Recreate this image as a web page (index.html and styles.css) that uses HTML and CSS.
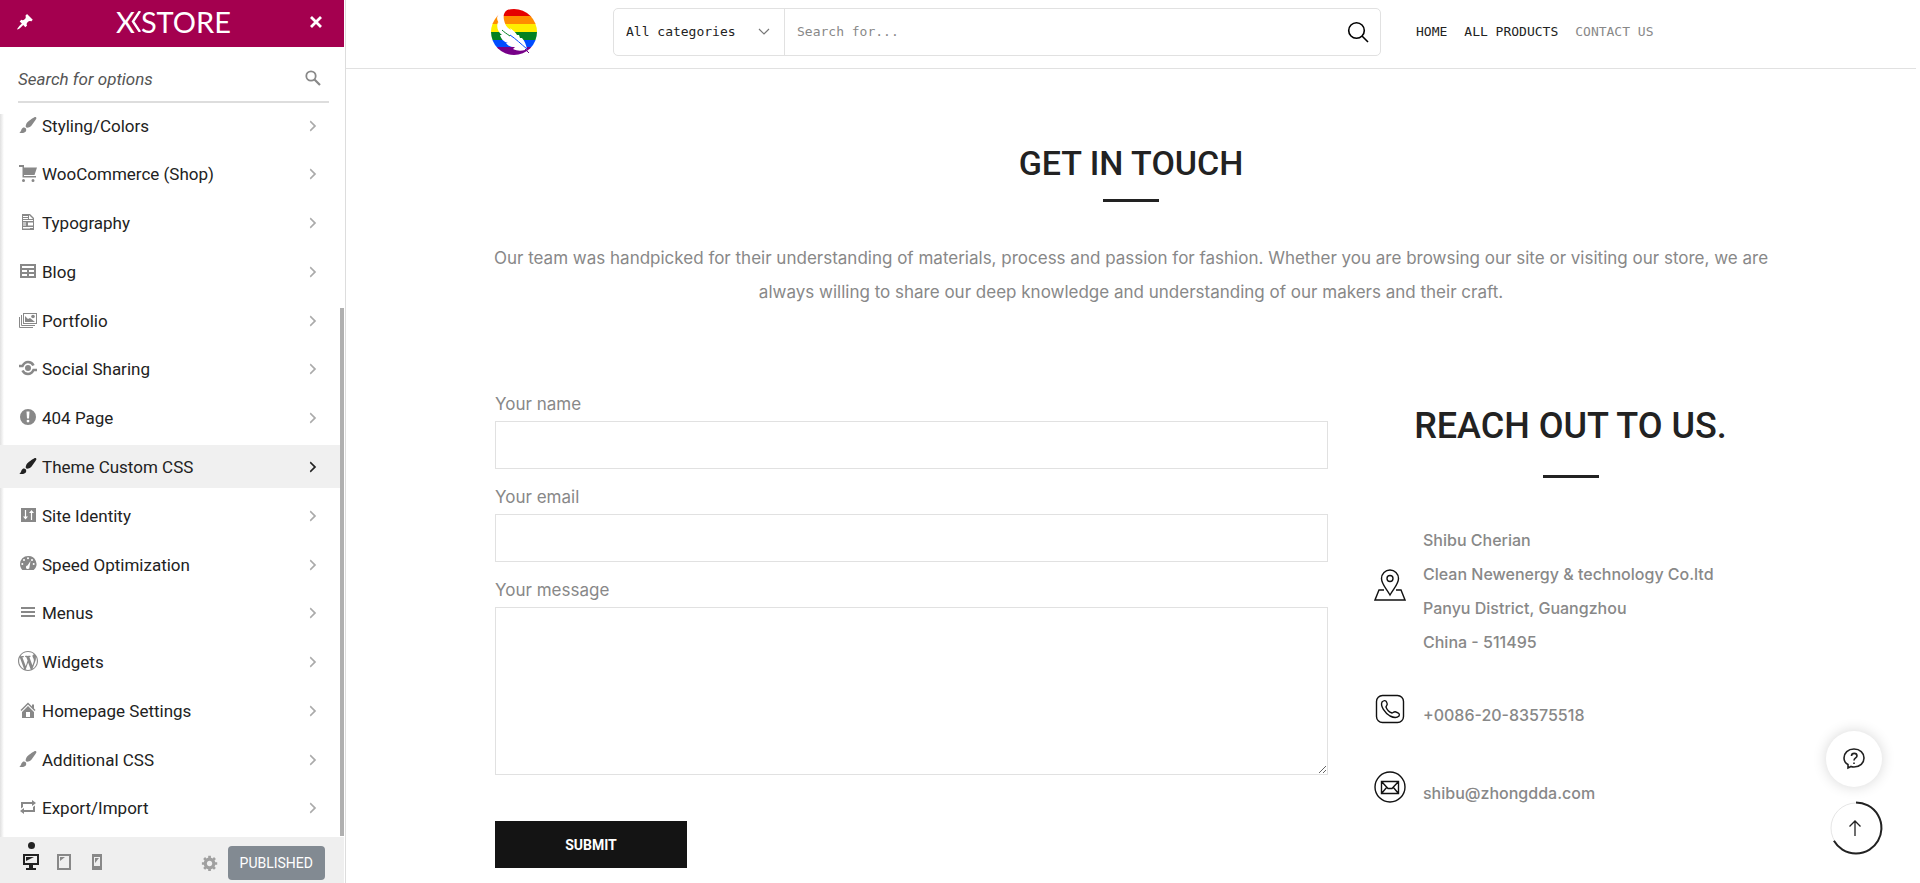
FILE: index.html
```html
<!DOCTYPE html>
<html lang="en">
<head>
    <meta charset="UTF-8">
    <meta name="viewport" content="width=device-width, initial-scale=1.0">
    <title>Contact Us</title>
    <link rel="stylesheet" href="styles.css">
</head>
<body>
    <!-- Shared icons -->
    <svg class="sprite" aria-hidden="true">
        <symbol id="i-brush" viewBox="0 0 20 20"><path d="M18.33 3.57s.27-.8-.31-1.36c-.53-.52-1.22-.24-1.22-.24-.61.3-5.76 3.47-7.67 5.57-.86.96-2.06 3.79-1.09 4.82.92.98 3.96-.17 4.79-1 2.06-2.06 5.21-7.17 5.5-7.79zM1.4 17.65c2.37-1.56 1.46-3.41 3.23-4.64.93-.65 2.22-.62 3.08.29.63.67.8 2.57-.16 3.46-1.57 1.45-4 1.55-6.15.89z"/></symbol>
        <symbol id="i-arrow" viewBox="0 0 20 20"><path d="M6 15l5-5-5-5 1-2 7 7-7 7z"/></symbol>
    </svg>

    <div class="customizer">
        <aside class="sidebar">
            <header class="sidebar-header">
                <button class="bar-button" aria-label="Pin">
                    <svg width="18" height="18" viewBox="0 0 20 20"><path d="M10.44 3.02l1.82-1.82 6.36 6.35-1.83 1.82c-1.05-.68-2.48-.57-3.41.36l-.75.75c-.92.93-1.04 2.35-.35 3.41l-1.83 1.82-2.41-2.41-2.8 2.79c-.42.42-3.38 2.71-3.8 2.29s1.86-3.39 2.28-3.81l2.79-2.79L4.1 9.36l1.83-1.82c1.05.69 2.48.57 3.4-.36l.75-.75c.93-.92 1.05-2.35.36-3.41z"/></svg>
                </button>
                <div class="brand">X<svg class="brand-mark" width="11" height="21" viewBox="0 0 11 21"><path d="M10 0L3 10.500L10 21" fill="none" stroke="#fff" stroke-width="2.400"/></svg>STORE</div>
                <button class="bar-button" aria-label="Close">
                    <svg width="14" height="14" viewBox="0 0 14 14"><path d="M2 2l10 10M12 2L2 12" fill="none" stroke="#fff" stroke-width="2.800"/></svg>
                </button>
            </header>

            <div class="options-search">
                <input type="search" aria-label="Search for options" placeholder="Search for options">
                <svg width="16" height="16" viewBox="0 0 16 16"><circle cx="6" cy="6" r="4.700" fill="none" stroke="#888" stroke-width="1.800"/><path d="M9.500 9.500L15 15" stroke="#888" stroke-width="2.200"/></svg>
            </div>

            <div class="options">
                <ul class="options-list">
                    <li><button><svg class="icon"><use href="#i-brush"/></svg>Styling/Colors<svg class="arrow"><use href="#i-arrow"/></svg></button></li>
                    <li><button><svg class="icon" viewBox="0 0 20 20"><path d="M6 13h12v1.500H4.500V4H1V2h5v2.500h13L16.500 12H6zM5.500 16a1.500 1.500 0 1 1 0 3 1.500 1.500 0 0 1 0-3zm9.500 0a1.500 1.500 0 1 1 0 3 1.500 1.500 0 0 1 0-3z"/></svg>WooCommerce (Shop)<svg class="arrow"><use href="#i-arrow"/></svg></button></li>
                    <li><button><svg class="icon" viewBox="0 0 20 20"><path fill-rule="evenodd" d="M4 2h8l4 4v12H4zM11 3v4h4zM5 4v1h5V4zm0 2v1h5V6zm0 2v1h10V8zm0 2.500v1h3v-1zm5 0v3h5v-3zm-5 2v1h3v-1zm0 2.500v1h10v-1zm0 1.500v.500h7v-.500z"/></svg>Typography<svg class="arrow"><use href="#i-arrow"/></svg></button></li>
                    <li><button><svg class="icon" viewBox="0 0 20 20"><path d="M18 17V3H2v14h16zM16 7H4V5h12v2zm-7 4H4V9h5v2zm7 0h-5V9h5v2zm-7 4H4v-2h5v2zm7 0h-5v-2h5v2z"/></svg>Blog<svg class="arrow"><use href="#i-arrow"/></svg></button></li>
                    <li><button><svg class="icon" viewBox="0 0 20 20"><path fill-rule="evenodd" d="M5 3h14v11H5zM6 4v9h12V4z"/><path d="M7 6l3 3 2-1 5 4H7z"/><circle cx="15" cy="6.500" r="1.800"/><path d="M3.500 5v10.500H17M1.500 7v10.500H15" fill="none" stroke="#888" stroke-width="1"/></svg>Portfolio<svg class="arrow"><use href="#i-arrow"/></svg></button></li>
                    <li><button><svg class="icon" viewBox="0 0 20 20"><circle cx="10" cy="10" r="3"/><path d="M1 8h3.500C6 5 8 4 10 4c2.500 0 4.500 1.500 5.500 3.500M19 12h-3.500C14 15 12 16 10 16c-2.500 0-4.500-1.500-5.500-3.500" fill="none" stroke="#888" stroke-width="2.600"/></svg>Social Sharing<svg class="arrow"><use href="#i-arrow"/></svg></button></li>
                    <li><button><svg class="icon" viewBox="0 0 20 20"><path fill-rule="evenodd" d="M10 2a8 8 0 1 1 0 16 8 8 0 0 1 0-16zM8.500 4.500l.500 7h2l.500-7zM10 12.700a1.400 1.400 0 1 0 0 2.800 1.400 1.400 0 0 0 0-2.800z"/></svg>404 Page<svg class="arrow"><use href="#i-arrow"/></svg></button></li>
                    <li class="active"><button><svg class="icon"><use href="#i-brush"/></svg>Theme Custom CSS<svg class="arrow"><use href="#i-arrow"/></svg></button></li>
                    <li><button><svg class="icon" viewBox="0 0 20 20"><path d="M3 3h15v14H3z"/><path d="M7.500 5v8M13.500 15V7" fill="none" stroke="#fff" stroke-width="1.200"/><path d="M5 11.500h5l-2.500 3zM11 8h5l-2.500-3z" fill="#fff"/></svg>Site Identity<svg class="arrow"><use href="#i-arrow"/></svg></button></li>
                    <li><button><svg class="icon" viewBox="0 0 20 20"><path d="M10 2a8 8 0 0 0-8 8c0 2.300.900 4.300 2.300 6h11.400A8 8 0 0 0 10 2z"/><g fill="#fff"><circle cx="10" cy="4.300" r="1"/><circle cx="6" cy="6" r="1"/><circle cx="14" cy="6" r="1"/><circle cx="4.300" cy="10" r="1"/><circle cx="15.700" cy="10" r="1"/><path d="M12.500 7l-1 6a1.800 1.800 0 1 1-2-1.500z"/></g></svg>Speed Optimization<svg class="arrow"><use href="#i-arrow"/></svg></button></li>
                    <li><button><svg class="icon" viewBox="0 0 20 20"><path d="M3 5h14v2H3zm0 4h14v2H3zm0 4h14v2H3z"/></svg>Menus<svg class="arrow"><use href="#i-arrow"/></svg></button></li>
                    <li><button><svg class="icon" viewBox="0 0 20 20"><path d="M20 10c0-5.510-4.490-10-10-10C4.480 0 0 4.490 0 10c0 5.520 4.480 10 10 10 5.510 0 10-4.480 10-10zM7.780 15.370L4.370 6.220c.55-.02 1.170-.08 1.170-.08.5-.06.44-1.130-.06-1.110 0 0-1.450.11-2.370.11-.18 0-.37 0-.58-.01C4.120 2.690 6.870 1.110 10 1.110c2.330 0 4.450.87 6.050 2.340-.68-.11-1.650.39-1.650 1.580 0 .74.45 1.360.9 2.100.35.61.55 1.360.55 2.460 0 1.490-1.400 5-1.400 5l-3.030-8.370c.54-.02.82-.17.82-.17.5-.05.44-1.250-.06-1.220 0 0-1.440.12-2.380.12-.87 0-2.330-.12-2.330-.12-.5-.03-.56 1.200-.06 1.220l.92.08 1.260 3.410zM17.410 10c.24-.64.74-1.870.43-4.250.7 1.290 1.050 2.710 1.050 4.250 0 3.290-1.730 6.240-4.400 7.780.97-2.590 1.940-5.200 2.920-7.780zM6.100 18.090C3.120 16.650 1.110 13.530 1.110 10c0-1.300.23-2.480.72-3.590C3.250 10.300 4.670 14.200 6.100 18.090zm4.030-6.630l2.580 6.980c-.86.29-1.760.45-2.710.45-.79 0-1.570-.11-2.290-.33.81-2.380 1.620-4.740 2.420-7.100z"/></svg>Widgets<svg class="arrow"><use href="#i-arrow"/></svg></button></li>
                    <li><button><svg class="icon" viewBox="0 0 20 20"><path d="M16 8.500l1.530 1.530-1.060 1.060L10 4.600l-6.470 6.500-1.060-1.070L10 2.500l4 4v-2h2v4zm-6-2.460l6 5.990V18H4v-5.970zM12 17v-5H8v5h4z"/></svg>Homepage Settings<svg class="arrow"><use href="#i-arrow"/></svg></button></li>
                    <li><button><svg class="icon"><use href="#i-brush"/></svg>Additional CSS<svg class="arrow"><use href="#i-arrow"/></svg></button></li>
                    <li><button><svg class="icon" viewBox="0 0 20 20"><path d="M5 7v3l-2 1.500V5h11V3l4 3.010L14 9V7H5zm10 6v-3l2-1.500V15H6v2l-4-3.010L6 11v2h9z"/></svg>Export/Import<svg class="arrow"><use href="#i-arrow"/></svg></button></li>
                </ul>
                <div class="scroll-thumb"></div>
            </div>

            <footer class="sidebar-footer">
                <div class="devices">
                    <button class="device current" aria-label="Desktop">
                        <svg width="18" height="18" viewBox="0 0 18 18"><path fill-rule="evenodd" d="M1 1h16v11h-6v3h3v2H4v-2h3v-3H1zM3 3v7h12V3z"/><path d="M4 4h8L4 8z"/></svg>
                    </button>
                    <button class="device" aria-label="Tablet">
                        <svg width="18" height="18" viewBox="0 0 18 18"><path fill-rule="evenodd" d="M2 1h14v16H2zM4 3v12h10V3z"/><path d="M5 4h5L5 8z"/></svg>
                    </button>
                    <button class="device" aria-label="Phone">
                        <svg width="18" height="18" viewBox="0 0 18 18"><path fill-rule="evenodd" d="M4 1h10v16H4zM6 4v9h6V4z"/><path d="M7 5h4l-4 5z"/></svg>
                    </button>
                </div>
                <button class="gear" aria-label="Publish settings">
                    <svg width="18" height="18" viewBox="0 0 20 20"><path d="M18 12h-2.180c-.17.7-.44 1.350-.81 1.930l1.540 1.540-2.100 2.100-1.540-1.540c-.58.36-1.230.63-1.910.79V19H8v-2.180c-.68-.16-1.330-.43-1.910-.79l-1.540 1.540-2.120-2.120 1.540-1.540c-.36-.58-.63-1.230-.79-1.910H1V9.030h2.170c.16-.7.44-1.350.8-1.940L2.430 5.550l2.100-2.100 1.540 1.540c.58-.37 1.240-.64 1.930-.81V2h3v2.180c.68.16 1.330.43 1.910.79l1.540-1.540 2.120 2.120-1.540 1.540c.36.59.64 1.240.8 1.940H18V12zm-8.500 1.500c1.660 0 3-1.340 3-3s-1.340-3-3-3-3 1.340-3 3 1.340 3 3 3z"/></svg>
                </button>
                <button class="published">PUBLISHED</button>
            </footer>
        </aside>

        <div class="preview">
            <header class="site-header">
                <a class="logo" href="#" aria-label="Home">
                    <svg width="48" height="48" viewBox="0 0 48 48">
                        <clipPath id="disc"><circle cx="24" cy="24" r="23"/></clipPath>
                        <g clip-path="url(#disc)">
                            <rect width="48" height="9" fill="#e50000"/>
                            <rect y="8" width="48" height="8" fill="#ff8d00"/>
                            <rect y="16" width="48" height="8" fill="#ffee00"/>
                            <rect y="24" width="48" height="8" fill="#028121"/>
                            <rect y="32" width="48" height="7" fill="#004cff"/>
                            <rect y="39" width="48" height="9" fill="#770088"/>
                        </g>
                        <path d="M0 0h20C14 3 13 7 14 12c1 5 3 8 7 10l-1-2c3 2 6 5 7 7l2 0 1 3 2 0c3 3 4 7 5 11l-2 1c-4 1-8 1-12-1l2-2c-4 0-7-1-9-4l2 0c-4-1-7-4-8-8l2 0c-4-3-6-8-4-13l1 1C6 11 7 8 9 6 7 7 4 11 0 16z" fill="#fff"/>
                        <path d="M20 27c6 4 11 9 17 14" fill="none" stroke="#004cff" stroke-width="1"/>
                        <path d="M12 22c2 2 5 4 8 6" fill="none" stroke="#028121" stroke-width="1"/>
                        <path d="M35 41l4 4" stroke="#770088" stroke-width="1"/>
                    </svg>
                </a>
                <form class="product-search">
                    <div class="category">
                        <select aria-label="Category">
                            <option>All categories</option>
                        </select>
                        <svg width="12" height="8" viewBox="0 0 12 8"><path d="M1 1l5 5 5-5" fill="none" stroke="#777" stroke-width="1.200"/></svg>
                    </div>
                    <input type="text" aria-label="Search products" placeholder="Search for...">
                    <button aria-label="Search">
                        <svg width="22" height="22" viewBox="0 0 22 22"><circle cx="9.500" cy="9.500" r="7.800" fill="none" stroke="#000" stroke-width="1.600"/><path d="M15 15l6 6" stroke="#000" stroke-width="1.600"/></svg>
                    </button>
                </form>
                <nav class="site-nav">
                    <a href="#">HOME</a>
                    <a href="#">ALL PRODUCTS</a>
                    <a class="current" href="#">CONTACT US</a>
                </nav>
            </header>

            <main class="content">
                <section class="intro">
                    <h1>GET IN TOUCH</h1>
                    <p>Our team was handpicked for their understanding of materials, process and passion for fashion. Whether you are browsing our site or visiting our store, we are always willing to share our deep knowledge and understanding of our makers and their craft.</p>
                </section>

                <div class="columns">
                    <form class="contact-form">
                        <label for="name">Your name</label>
                        <input id="name" type="text">
                        <label for="email">Your email</label>
                        <input id="email" type="email">
                        <label for="message">Your message</label>
                        <textarea id="message"></textarea>
                        <button type="submit">SUBMIT</button>
                    </form>

                    <section class="reach">
                        <h2>REACH OUT TO US.</h2>
                        <ul>
                            <li>
                                <svg width="32" height="32" viewBox="0 0 32 32"><path d="M16 26C12 19 7.500 15 7.500 9.500a8.500 8.500 0 0 1 17 0C24.500 15 20 19 16 26zM10 21H5L1 31h30l-4-10h-5" /><circle cx="16" cy="9.500" r="3"/></svg>
                                <address>Shibu Cherian<br>Clean Newenergy &amp; technology Co.ltd<br>Panyu District, Guangzhou<br>China - 511495</address>
                            </li>
                            <li>
                                <svg width="32" height="32" viewBox="0 0 32 32"><rect x="2.500" y="2.500" width="27" height="27" rx="6"/><path d="M8 9c2-2 4-2 5 1 1 2-1 3-1 4 1 3 3 5 6 6 1 0 2-2 4-1 3 1 4 2 3 4-2 2-5 2-9 0C11 20 6 13 8 9z"/></svg>
                                <span>+0086-20-83575518</span>
                            </li>
                            <li>
                                <svg width="32" height="32" viewBox="0 0 32 32"><circle cx="16" cy="16" r="15"/><path d="M7.500 10.500h17v12h-17zM7.500 10.500l6.500 7h4l6.500-7M7.500 22.500L13 16M24.500 22.500L19 16"/></svg>
                                <span>shibu@zhongdda.com</span>
                            </li>
                        </ul>
                    </section>
                </div>
            </main>
        </div>
    </div>

    <!-- Floating buttons -->
    <div class="floating">
        <button class="help" aria-label="Help">
            <svg width="24" height="24" viewBox="0 0 24 24"><path d="M6 21v-3.500C3 16 2 13.500 2 11c0-5 4-9 10-9s10 4 10 9-4 9-10 9c-1.500 0-2 0-3-.500z"/><path d="M9.500 9c0-3.500 5.500-3.500 5.500 0 0 2-3 2-3 4.500M12 15.500v1.500"/></svg>
        </button>
        <button class="to-top" aria-label="Back to top">
            <svg width="54" height="54" viewBox="0 0 54 54"><circle cx="27" cy="27" r="25" stroke="#e6e6e6" stroke-width="1"/><path d="M27 1.500A25.500 25.500 0 1 1 4.900 39.800" stroke="#222" stroke-width="2"/><path d="M26 35V20M20.500 25.500L26 20l5.500 5.500" stroke="#222" stroke-width="1.300"/></svg>
        </button>
    </div>
</body>
</html>
```
FILE: styles.css
```css
* {
  box-sizing: border-box;
}

body {
  margin: 0;
  background-color: #fff;
  color: #888;
  font-family: Inter, sans-serif;
  font-size: 16px;
}

h1, h2, p, ul {
  margin: 0;
  padding: 0;
}

ul {
  list-style: none;
}

button {
  padding: 0;
  border: none;
  background: none;
  cursor: pointer;
}

svg {
  display: block;
  flex: none;
}

.sprite {
  display: none;
}

.customizer {
  display: grid;
  grid-template-columns: 346px 1fr;
  min-height: 100vh;
}

/* Sidebar */
.sidebar {
  display: flex;
  flex-direction: column;
  height: 100vh;
  padding-right: 1px;
  border-right: 1px solid #ddd;
  color: #222;
  font-family: Roboto, sans-serif;
}

.sidebar-header {
  display: flex;
  align-items: center;
  justify-content: space-between;
  height: 47px;
  padding: 0 21px 4px 16px;
  background-color: #a4004f;
  fill: #fff;
}

.brand {
  display: flex;
  align-items: center;
  padding-left: 4px;
  color: #fff;
  font-family: Lato, sans-serif;
  font-size: 29px;
  line-height: 36px;
}

.brand-mark {
  margin-left: -5px;
}

.options-search {
  display: flex;
  align-items: center;
  height: 56px;
  margin: 0 15px 0 18px;
  padding: 8px 8px 0 0;
  border-bottom: 2px solid #ddd;
}

.options-search input {
  flex: 1;
  min-width: 0;
  padding: 2px 0 0;
  border: none;
  outline: none;
  background: none;
  font: italic 17px Roboto, sans-serif;
}

.options-search input::placeholder {
  color: #555;
}

.options {
  flex: 1;
  display: flex;
  min-height: 0;
}

.options-list {
  flex: 1;
  display: flex;
  flex-direction: column;
  justify-content: space-between;
  padding: 1px 0 7px;
  background: linear-gradient(to right, #e0e0e0, #fff 4px) 0 11px no-repeat;
}

.options-list button {
  display: flex;
  align-items: center;
  width: 100%;
  height: 43px;
  padding: 0 19px 0 18px;
  color: #222;
  font: 17px Roboto, sans-serif;
  text-align: left;
}

.options-list .active {
  background-color: #f0f0f0;
}

.icon {
  width: 20px;
  height: 20px;
  margin: 0 4px 2px 0;
  fill: #888;
}

.arrow {
  width: 16px;
  height: 16px;
  margin-left: auto;
  fill: #aaa;
}

.active .icon,
.active .arrow {
  fill: #222;
}

.scroll-thumb {
  width: 4px;
  margin: 205px 0 1px;
  background-color: #b0b0b0;
}

.sidebar-footer {
  display: flex;
  align-items: center;
  height: 46px;
  padding: 6px 19px 0 22px;
  background-color: #efefef;
}

.devices {
  display: flex;
  gap: 15px;
  margin: 0 auto 14px 0;
}

.device {
  display: flex;
  flex-direction: column;
  align-items: center;
  fill: #888;
}

/* Dot above the device in use */
.device::before {
  content: "";
  width: 7px;
  height: 7px;
  margin: 0 0 4px;
  border-radius: 50%;
}

.device.current {
  fill: #222;
}

.device.current::before {
  background-color: #222;
}

.gear {
  margin-right: 9px;
  fill: #a0a0a0;
}

.published {
  height: 34px;
  padding: 0 12px;
  border-radius: 4px;
  background-color: #828a92;
  color: #fff;
  font: 14px Roboto, sans-serif;
}

/* Site preview */
.preview {
  min-width: 0;
  padding-right: 4px;
}

.site-header {
  display: flex;
  align-items: center;
  height: 69px;
  padding: 0 149px 5px 144px;
  border-bottom: 1px solid #e1e1e1;
  font-family: "DejaVu Sans Mono", monospace;
  font-size: 13px;
}

.product-search {
  display: flex;
  flex: 1;
  max-width: 768px;
  height: 48px;
  margin: 0 35px 0 75px;
  border: 1px solid #e1e1e1;
  border-radius: 5px;
}

.category {
  display: flex;
  align-items: center;
  width: 171px;
  padding: 0 14px 0 12px;
  border-right: 1px solid #e1e1e1;
}

.category select {
  flex: 1;
  appearance: none;
  border: none;
  background: none;
  color: #222;
  font: inherit;
}

.product-search input {
  flex: 1;
  min-width: 0;
  padding: 0 12px;
  border: none;
  outline: none;
  background: none;
  font: inherit;
}

.product-search input::placeholder {
  color: #888;
}

.product-search button {
  padding: 0 11px;
}

.site-nav {
  display: flex;
  gap: 17px;
}

.site-nav a {
  color: #222;
  text-decoration: none;
  white-space: nowrap;
}

.site-nav .current {
  color: #888;
}

.content {
  max-width: 1272px;
  margin: 0 auto;
  padding-top: 72px;
}

h1, h2 {
  color: #222;
  font-family: Roboto, sans-serif;
  font-weight: 500;
  text-align: center;
}

h1::after, h2::after {
  content: "";
  display: block;
  width: 56px;
  height: 3px;
  margin: 14px auto 0;
  background-color: #222;
}

h1 {
  font-size: 34px;
  line-height: 44px;
}

h2 {
  padding-top: 14px;
  font-size: 36px;
  line-height: 50px;
}

h2::after {
  margin-top: 24px;
}

.intro p {
  margin: 39px -8px 0;
  font-size: 17px;
  line-height: 34px;
  text-align: center;
}

.columns {
  display: grid;
  grid-template-columns: 1fr 393px;
  gap: 46px;
  margin-top: 78px;
}

.contact-form {
  display: flex;
  flex-direction: column;
}

.contact-form label {
  font-size: 17px;
  line-height: 34px;
}

.contact-form input,
.contact-form textarea {
  width: 100%;
  height: 48px;
  margin-bottom: 11px;
  padding: 0 12px;
  border: 1px solid #e1e1e1;
  background-color: #fff;
  font: inherit;
}

.contact-form textarea {
  height: 168px;
  margin-bottom: 46px;
  resize: vertical;
}

.contact-form button {
  align-self: flex-start;
  width: 192px;
  height: 47px;
  background-color: #141414;
  color: #fff;
  font: bold 14px Roboto, sans-serif;
}

.reach ul {
  display: flex;
  flex-direction: column;
  gap: 34px;
  margin-top: 45px;
  font-weight: 500;
  line-height: 34px;
}

.reach li {
  display: flex;
  align-items: center;
  gap: 17px;
}

.reach svg {
  margin-bottom: 12px;
  fill: none;
  stroke: #111;
  stroke-width: 1.4;
}

.reach address {
  font-style: normal;
}

.floating {
  position: fixed;
  right: 37px;
  bottom: 28px;
  display: flex;
  flex-direction: column;
  align-items: flex-end;
  gap: 14px;
}

.floating svg {
  margin: auto;
  fill: none;
}

.help {
  width: 56px;
  height: 56px;
  margin-right: 1px;
  border-radius: 50%;
  background-color: #fff;
  box-shadow: 0 0 14px rgba(0, 0, 0, 0.16);
  stroke: #222;
  stroke-width: 1.6;
}

.to-top {
  width: 54px;
  height: 54px;
  border-radius: 50%;
  background-color: #fff;
}
```
